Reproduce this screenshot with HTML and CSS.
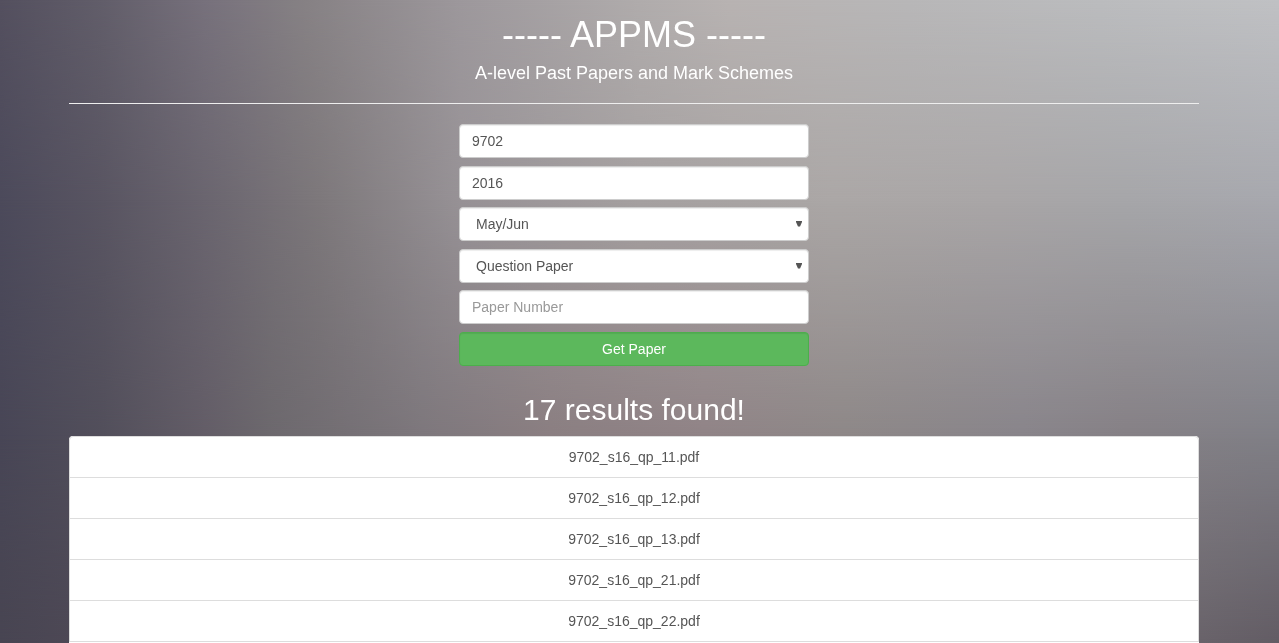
FILE: index.html
```html
<!DOCTYPE html>
<html lang="en">
<head>
<meta charset="utf-8">
<meta name="viewport" content="width=device-width, initial-scale=1">
<title>APPMS</title>
<link rel="stylesheet" href="styles.css">
</head>
<body>
<div class="backdrop" aria-hidden="true">
  <div class="tone tone-top"></div>
  <div class="tone tone-upper"></div>
  <div class="tone tone-lower"></div>
  <div class="tone tone-bottom"></div>
</div>
<main class="container">
  <header class="header">
    <h1 class="title">----- APPMS -----</h1>
    <h4 class="subtitle">A-level Past Papers and Mark Schemes</h4>
  </header>
  <hr class="divider">
  <form class="search">
    <div class="group">
      <input class="control" type="text" aria-label="Subject code" value="9702">
      <input class="control" type="text" aria-label="Year" value="2016">
    </div>
    <div class="group">
      <div class="select">
        <select class="control control-select" aria-label="Session"><option>May/Jun</option></select>
        <svg class="arrow" viewBox="0 0 6 6" aria-hidden="true"><path d="M0 0H6V1L4 5.5H2L0 1Z"/></svg>
      </div>
      <div class="select">
        <select class="control control-select" aria-label="Paper type"><option>Question Paper</option></select>
        <svg class="arrow" viewBox="0 0 6 6" aria-hidden="true"><path d="M0 0H6V1L4 5.5H2L0 1Z"/></svg>
      </div>
    </div>
    <div class="group">
      <input class="control" type="text" aria-label="Paper Number" placeholder="Paper Number">
      <button class="button" type="button">Get Paper</button>
    </div>
  </form>
  <h2 class="count">17 results found!</h2>
  <nav class="results">
    <a class="result" href="#">9702_s16_qp_11.pdf</a>
    <a class="result" href="#">9702_s16_qp_12.pdf</a>
    <a class="result" href="#">9702_s16_qp_13.pdf</a>
    <a class="result" href="#">9702_s16_qp_21.pdf</a>
    <a class="result" href="#">9702_s16_qp_22.pdf</a>
  </nav>
</main>
</body>
</html>
```
FILE: styles.css
```css
* { box-sizing: border-box; }

html { scrollbar-width: none; }

body {
  margin: 0;
  padding-right: 11px;
  font: 14px/20px "Liberation Sans", Arial, sans-serif;
  color: #fff;
  background: #77717a;
}

/* Horizontal colour bands, each faded into the one above it */
.backdrop { position: fixed; inset: 0; z-index: -1; }
.tone { position: absolute; inset: 0; }

.tone-top {
  background: linear-gradient(90deg, #54505f 0%, #625e6a 8%, #77717c 16%, #878285 24%, #9d989c 36%, #b0acac 50%, #b8b3b2 57%, #b8b7b8 71%, #bbbcbe 86%, #c0c1c4 100%);
}
.tone-upper {
  background: linear-gradient(90deg, #4c4a5b 0%, #595562 8%, #6a656f 16%, #7d787b 25%, #979296 36%, #a5a0a0 50%, #aba7a6 65%, #a9a6a7 78%, #a6a6a9 88%, #a7a8ae 100%);
  mask-image: linear-gradient(transparent 0%, #000 31%);
}
.tone-lower {
  background: linear-gradient(90deg, #484656 0%, #524f5b 8%, #635d67 16%, #6c686d 21%, #7d777c 33%, #8a7e81 43%, #908386 55%, #8d8787 66%, #88848a 80%, #858085 88%, #807f86 100%);
  mask-image: linear-gradient(transparent 31%, #000 68%);
}
.tone-bottom {
  background: linear-gradient(90deg, #484552 0%, #4d4855 6%, #5a5560 50%, #69636a 93%, #625c64 100%);
  mask-image: linear-gradient(transparent 68%, #000 100%);
}

.container { max-width: 1130px; margin: 0 auto; padding-top: 15px; }

.header { display: grid; gap: 8px; text-align: center; }
.title, .subtitle, .count { margin: 0; font-weight: 400; text-align: center; }
.title { font-size: 36px; line-height: 40px; }
.subtitle { font-size: 18px; line-height: 20px; }

.divider { margin: 20px 0; border: 0; border-top: 1px solid #eee; }

.search { display: grid; gap: 7px; max-width: 350px; margin: 0 auto; }
.group { display: grid; gap: 8px; }

.control {
  width: 100%;
  height: 34px;
  padding: 6px 12px;
  font: inherit;
  color: #555;
  background: #fff;
  border: 1px solid #ccc;
  border-radius: 4px;
  box-shadow: inset 0 1px 1px rgba(0, 0, 0, .075);
}
.control::placeholder { color: #999; opacity: 1; }

.select { position: relative; display: grid; }
.control-select { appearance: none; padding: 6px 16px; }
.arrow { position: absolute; right: 7px; top: 14px; width: 6px; height: 6px; fill: #555; pointer-events: none; }

.button {
  height: 34px;
  padding: 6px 12px;
  font: inherit;
  color: #fff;
  background: #5cb85c;
  border: 1px solid #4cae4c;
  border-radius: 4px;
  box-shadow: inset 0 1px 1px rgba(0, 0, 0, .075);
  cursor: pointer;
}

.count { margin: 27px 0 10px; font-size: 30px; line-height: 33px; }

.results {
  display: flex;
  flex-direction: column;
  padding-bottom: 10px;
  background: #fff;
  border-radius: 4px;
}
.result {
  margin-bottom: -1px;
  padding: 10px 15px;
  color: #555;
  text-align: center;
  text-decoration: none;
  background: #fff;
  border: 1px solid #ddd;
}
.result:first-child { border-radius: 4px 4px 0 0; }
```
